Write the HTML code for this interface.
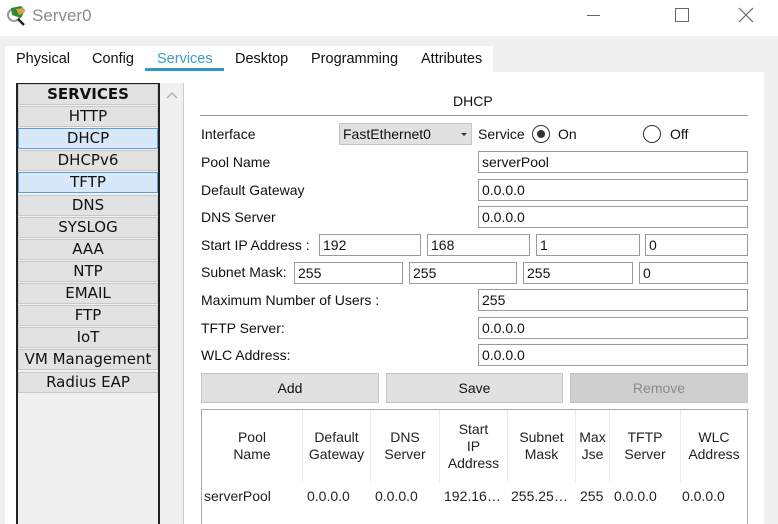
<!DOCTYPE html>
<html><head><meta charset="utf-8"><style>
*{box-sizing:border-box;margin:0;padding:0}
body{width:778px;height:524px;overflow:hidden;background:#f0f0f0;font-family:"Liberation Sans",Arial,sans-serif;font-size:14px;color:#111;position:relative}
.a{position:absolute}
.t{white-space:nowrap}
.in{position:absolute;height:22px;border:1px solid #9a9a9a;background:#fff;padding-left:3px;line-height:20px;font-size:14px}
.lb{position:absolute;left:201px;font-size:14px;line-height:16px}
.side{position:absolute;left:18px;width:140px;height:21px;background:#e2e2e2;border:1px solid #c8c8c8;text-align:center;font-family:"DejaVu Sans",sans-serif;font-size:15px;line-height:19px;color:#111}
.side.sel{background:#d8e8f8;border:1px solid #5a9fd6}
.btn{position:absolute;top:373px;height:30px;background:#e1e1e1;border:1px solid #c4c4c4;text-align:center;line-height:28px}
.th{position:absolute;top:410px;height:72px;display:flex;align-items:center;justify-content:center;text-align:center;line-height:17px;color:#222;border-right:1px solid #ececec}
.td{position:absolute;top:488px;line-height:16px;color:#222}
.tab{position:absolute;top:51px;font-size:14.5px}
</style></head><body>
<div class="a" style="left:0;top:0;width:778px;height:36px;background:#fff"></div>
<svg class="a" style="left:5px;top:4px" width="24" height="24" viewBox="0 0 24 24"><circle cx="9" cy="11" r="6" fill="none" stroke="#999" stroke-width="2"/><path d="M13 15l6 6" stroke="#222" stroke-width="2.5"/><path d="M6 4l10-2 4 4-4 8-9-3z" fill="#2f8a2f"/><path d="M11 5l7-1 2 4-6 3z" fill="#d9a440"/></svg>
<div class="a t" style="left:32px;top:6px;font-size:17px;color:#8a8a8a">Server0</div>
<div class="a" style="left:587px;top:15px;width:13px;height:1px;background:#666"></div>
<div class="a" style="left:675px;top:8px;width:14px;height:14px;border:1px solid #666"></div>
<svg class="a" style="left:738px;top:7px" width="16" height="16"><path d="M1 1L15 15M15 1L1 15" stroke="#666" stroke-width="1.2"/></svg>

<div class="a" style="left:5px;top:46px;width:488px;height:27px;background:#fff"></div>
<div class="tab t" style="left:16px">Physical</div>
<div class="tab t" style="left:92px">Config</div>
<div class="tab t" style="left:157px;color:#3b9bc8">Services</div>
<div class="a" style="left:145px;top:68px;width:79px;height:3px;background:#2e9ac6"></div>
<div class="tab t" style="left:235px">Desktop</div>
<div class="tab t" style="left:311px">Programming</div>
<div class="tab t" style="left:421px">Attributes</div>

<div class="a" style="left:5px;top:72px;width:759px;height:452px;background:#fff"></div>
<div class="a" style="left:16px;top:83px;width:144px;height:441px;background:#f0f0f0;border-left:2px solid #222;border-right:2px solid #222;border-top:1px solid #222"></div>
<div class="a" style="left:160px;top:83px;width:24px;height:441px;background:#f0f0f0;border-right:1px solid #ccc"></div>
<svg class="a" style="left:166px;top:91px" width="12" height="8"><path d="M1 7L6 2L11 7" fill="none" stroke="#aaa" stroke-width="1.3"/></svg>
<div class="side" style="top:84px;font-weight:bold">SERVICES</div>
<div class="side" style="top:106px">HTTP</div>
<div class="side sel" style="top:128px">DHCP</div>
<div class="side" style="top:150px">DHCPv6</div>
<div class="side sel" style="top:172px">TFTP</div>
<div class="side" style="top:195px">DNS</div>
<div class="side" style="top:217px">SYSLOG</div>
<div class="side" style="top:239px">AAA</div>
<div class="side" style="top:261px">NTP</div>
<div class="side" style="top:283px">EMAIL</div>
<div class="side" style="top:305px">FTP</div>
<div class="side" style="top:327px">IoT</div>
<div class="side" style="top:349px">VM Management</div>
<div class="side" style="top:372px">Radius EAP</div>

<div class="a t" style="left:453px;top:93px">DHCP</div>
<div class="a" style="left:200px;top:115px;width:548px;height:1px;background:#999"></div>

<div class="lb" style="top:126px">Interface</div>
<div class="a" style="left:339px;top:123px;width:133px;height:22px;background:#e1e1e1;border:1px solid #c4c4c4;padding-left:3px;line-height:20px">FastEthernet0</div>
<div class="a" style="left:461px;top:133px;border-left:3px solid transparent;border-right:3px solid transparent;border-top:3px solid #333"></div>
<div class="a t" style="left:478px;top:126px">Service</div>
<div class="a" style="left:532px;top:125px;width:18px;height:18px;border:1px solid #333;border-radius:50%"></div>
<div class="a" style="left:537px;top:130px;width:8px;height:8px;background:#333;border-radius:50%"></div>
<div class="a t" style="left:558px;top:126px">On</div>
<div class="a" style="left:643px;top:125px;width:18px;height:18px;border:1px solid #333;border-radius:50%"></div>
<div class="a t" style="left:670px;top:126px">Off</div>

<div class="lb" style="top:154px">Pool Name</div><div class="in" style="left:478px;top:151px;width:270px">serverPool</div>
<div class="lb" style="top:182px">Default Gateway</div><div class="in" style="left:478px;top:179px;width:270px">0.0.0.0</div>
<div class="lb" style="top:209px">DNS Server</div><div class="in" style="left:478px;top:206px;width:270px">0.0.0.0</div>
<div class="lb" style="top:237px">Start IP Address :</div>
<div class="in" style="left:319px;top:234px;width:102px">192</div>
<div class="in" style="left:427px;top:234px;width:103px">168</div>
<div class="in" style="left:536px;top:234px;width:104px">1</div>
<div class="in" style="left:645px;top:234px;width:103px">0</div>
<div class="lb" style="top:264px">Subnet Mask:</div>
<div class="in" style="left:294px;top:262px;width:109px">255</div>
<div class="in" style="left:409px;top:262px;width:108px">255</div>
<div class="in" style="left:523px;top:262px;width:110px">255</div>
<div class="in" style="left:639px;top:262px;width:109px">0</div>
<div class="lb" style="top:292px">Maximum Number of Users :</div><div class="in" style="left:478px;top:289px;width:270px">255</div>
<div class="lb" style="top:320px">TFTP Server:</div><div class="in" style="left:478px;top:317px;width:270px">0.0.0.0</div>
<div class="lb" style="top:347px">WLC Address:</div><div class="in" style="left:478px;top:344px;width:270px">0.0.0.0</div>

<div class="btn" style="left:201px;width:178px">Add</div>
<div class="btn" style="left:386px;width:177px">Save</div>
<div class="btn" style="left:570px;width:178px;background:#cfcfcf;color:#8a8a8a">Remove</div>

<div class="a" style="left:201px;top:409px;width:547px;height:115px;border:1px solid #aaa;border-bottom:none"></div>
<div class="th" style="left:202px;width:101px">Pool<br>Name</div>
<div class="th" style="left:303px;width:68px">Default<br>Gateway</div>
<div class="th" style="left:371px;width:69px">DNS<br>Server</div>
<div class="th" style="left:440px;width:68px">Start<br>IP<br>Address</div>
<div class="th" style="left:508px;width:68px">Subnet<br>Mask</div>
<div class="th" style="left:576px;width:34px;overflow:hidden">Max<br>Jse</div>
<div class="th" style="left:610px;width:71px">TFTP<br>Server</div>
<div class="th" style="left:681px;width:66px;border-right:none">WLC<br>Address</div>
<div class="td t" style="left:204px">serverPool</div>
<div class="td t" style="left:307px">0.0.0.0</div>
<div class="td t" style="left:375px">0.0.0.0</div>
<div class="td t" style="left:444px">192.16…</div>
<div class="td t" style="left:511px">255.25…</div>
<div class="td t" style="left:580px">255</div>
<div class="td t" style="left:614px">0.0.0.0</div>
<div class="td t" style="left:682px">0.0.0.0</div>
</body></html>
